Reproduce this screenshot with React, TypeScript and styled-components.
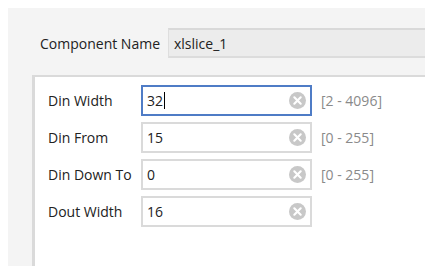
import styled, { createGlobalStyle } from 'styled-components';

const GlobalStyle = createGlobalStyle`
    html, body {
        margin: 0;
        padding: 0;
        background: #ffffff;
    }

    body {
        font-family: 'Open Sans', 'Noto Sans', sans-serif;
        font-size: 14px;
        color: #222222;
    }
`;

const Outer = styled.div`
    display: flex;
    flex-direction: column;
    margin: 8px 10px 0 8px;
    height: 258px;
    background: #f4f4f4;
    overflow: hidden;
`;

const NameRow = styled.div`
    display: flex;
    align-items: center;
    padding: 20px 0 0 32px;
`;

const NameLabel = styled.div`
    width: 128px;
`;

const NameInput = styled.div`
    flex: 1;
    display: flex;
    align-items: center;
    height: 26px;
    padding-left: 5px;
    background: #ececec;
    border-top: 2px solid #d9d9d9;
    border-left: 1px solid #dedede;
    border-bottom: 2px solid #dcdcdc;
`;

const Inner = styled.div`
    flex: 1;
    margin: 17px 0 0 24px;
    padding: 8px 0 0 13px;
    background: #ffffff;
    border-top: 2px solid #dadada;
    border-left: 3px solid #dadada;
`;

const Fields = styled.div`
    display: flex;
    flex-direction: column;
    gap: 6px;
`;

const Row = styled.div`
    display: flex;
    align-items: center;
`;

const Label = styled.div`
    width: 93px;
    white-space: nowrap;
`;

const InputBox = styled.div<{ focused?: boolean }>`
    box-sizing: border-box;
    display: flex;
    align-items: center;
    width: 171px;
    height: 31px;
    padding: 0 4px 0 4px;
    border: 2px solid ${({ focused }) => (focused ? '#4f7cc6' : '#dadada')};
    background: #ffffff;
`;

const Value = styled.div`
    flex: 1;
    display: flex;
    align-items: center;
`;

const Caret = styled.span`
    display: inline-block;
    width: 1px;
    height: 17px;
    margin-left: 1px;
    background: #000000;
`;

const ClearIcon = styled.svg`
    flex: none;
    width: 17px;
    height: 17px;
`;

const Range = styled.div`
    margin-left: 9px;
    color: #8a8a8a;
`;

function Clear() {
    return (
        <ClearIcon viewBox="0 0 16 16">
            <circle cx="8" cy="8" r="8" fill="#c8c8c8" />
            <path d="M5 5 L11 11 M11 5 L5 11" stroke="#ffffff" strokeWidth="2" strokeLinecap="round" />
        </ClearIcon>
    );
}

const fields = [
    { label: 'Din Width', value: '32', range: '[2 - 4096]', focused: true },
    { label: 'Din From', value: '15', range: '[0 - 255]' },
    { label: 'Din Down To', value: '0', range: '[0 - 255]' },
    { label: 'Dout Width', value: '16' },
];

export default function App() {
    return (
        <>
            <GlobalStyle />
            <Outer>
                <NameRow>
                    <NameLabel>Component Name</NameLabel>
                    <NameInput>xlslice_1</NameInput>
                </NameRow>

                <Inner>
                    <Fields>
                        {fields.map(f => (
                            <Row key={f.label}>
                                <Label>{f.label}</Label>
                                <InputBox focused={f.focused}>
                                    <Value>
                                        {f.value}
                                        {f.focused && <Caret />}
                                    </Value>
                                    <Clear />
                                </InputBox>
                                {f.range && <Range>{f.range}</Range>}
                            </Row>
                        ))}
                    </Fields>
                </Inner>
            </Outer>
        </>
    );
}
